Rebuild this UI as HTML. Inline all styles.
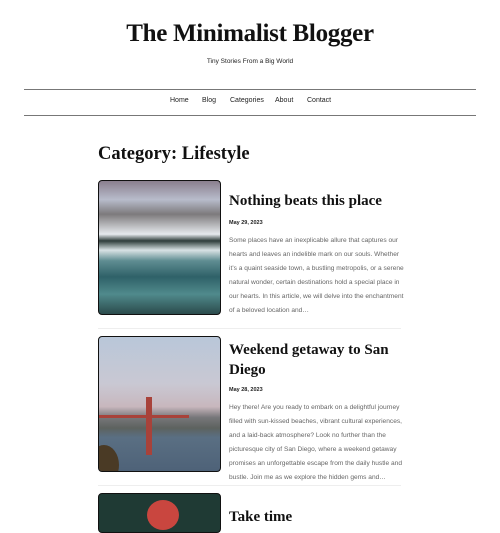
<!DOCTYPE html>
<html><head><meta charset="utf-8"><style>
*{margin:0;padding:0;box-sizing:border-box}
body{width:500px;height:511px;overflow:hidden;background:#fff;font-family:"Liberation Sans",sans-serif;color:#111;position:relative}
.a{position:absolute}
.serif{font-family:"Liberation Serif",serif;font-weight:bold;color:#111}
.line{position:absolute;left:24px;width:452px;height:1px;background:#777}
.nav span{position:absolute;top:97px;font-size:7px;color:#222}
.img{position:absolute;left:98px;width:123px;border:1.5px solid #111;border-radius:4px;overflow:hidden}
.t{position:absolute;left:229px;font-size:15px;line-height:20px;width:175px}
.d{position:absolute;left:229px;font-size:5.5px;font-weight:bold;color:#222}
.p{position:absolute;left:229px;font-size:6.6px;line-height:14px;color:#666;white-space:nowrap}
.sep{position:absolute;left:98px;width:303px;height:1px;background:#eee}
</style></head><body>
<div class="a serif" style="top:20px;left:0;width:500px;text-align:center;font-size:25px;letter-spacing:-0.3px">The Minimalist Blogger</div>
<div class="a" style="top:58px;left:0;width:500px;text-align:center;font-size:6.5px;color:#222">Tiny Stories From a Big World</div>
<div class="line" style="top:89px"></div>
<div class="line" style="top:115px"></div>
<div class="nav"><span style="left:170px">Home</span><span style="left:202px">Blog</span><span style="left:230px">Categories</span><span style="left:275px">About</span><span style="left:307px">Contact</span></div>
<div class="a serif" style="top:144px;left:98px;font-size:18.5px">Category: Lifestyle</div>

<div class="img" style="top:180px;height:135px;background:linear-gradient(180deg,#8a7f8e 0%,#b8bccb 14%,#7d7a7c 25%,#e6eaee 40%,#2e3d3a 45%,#d8e2e4 52%,#5f8d92 60%,#2f6168 72%,#508a8c 85%,#2b4b4c 100%)"></div>
<div class="t serif" style="top:191px">Nothing beats this place</div>
<div class="d" style="top:220px">May 29, 2023</div>
<div class="p" style="top:234px">Some places have an inexplicable allure that captures our<br>hearts and leaves an indelible mark on our souls. Whether<br>it’s a quaint seaside town, a bustling metropolis, or a serene<br>natural wonder, certain destinations hold a special place in<br>our hearts. In this article, we will delve into the enchantment<br>of a beloved location and…</div>
<div class="sep" style="top:328px"></div>

<div class="img" style="top:336px;height:136px;background:linear-gradient(180deg,#b9c7d9 0%,#c9c8d3 35%,#c8b7bd 52%,#77777a 60%,#5d625f 68%,#5a6f83 75%,#4e6278 100%)">
<div class="a" style="left:47px;top:60px;width:6px;height:58px;background:#a8423a"></div>
<div class="a" style="left:0;top:78px;width:90px;height:3px;background:#a8423a"></div>
<div class="a" style="left:-10px;top:108px;width:30px;height:40px;background:#4a3a25;border-radius:50%"></div>
</div>
<div class="t serif" style="top:340px">Weekend getaway to San Diego</div>
<div class="d" style="top:387px">May 28, 2023</div>
<div class="p" style="top:401px">Hey there! Are you ready to embark on a delightful journey<br>filled with sun-kissed beaches, vibrant cultural experiences,<br>and a laid-back atmosphere? Look no further than the<br>picturesque city of San Diego, where a weekend getaway<br>promises an unforgettable escape from the daily hustle and<br>bustle. Join me as we explore the hidden gems and…</div>
<div class="sep" style="top:485px"></div>

<div class="img" style="top:493px;height:40px;background:#1f3a34">
<div class="a" style="left:48px;top:6px;width:32px;height:30px;border-radius:50%;background:#c9463f"></div>
</div>
<div class="t serif" style="top:507px">Take time</div>
</body></html>
